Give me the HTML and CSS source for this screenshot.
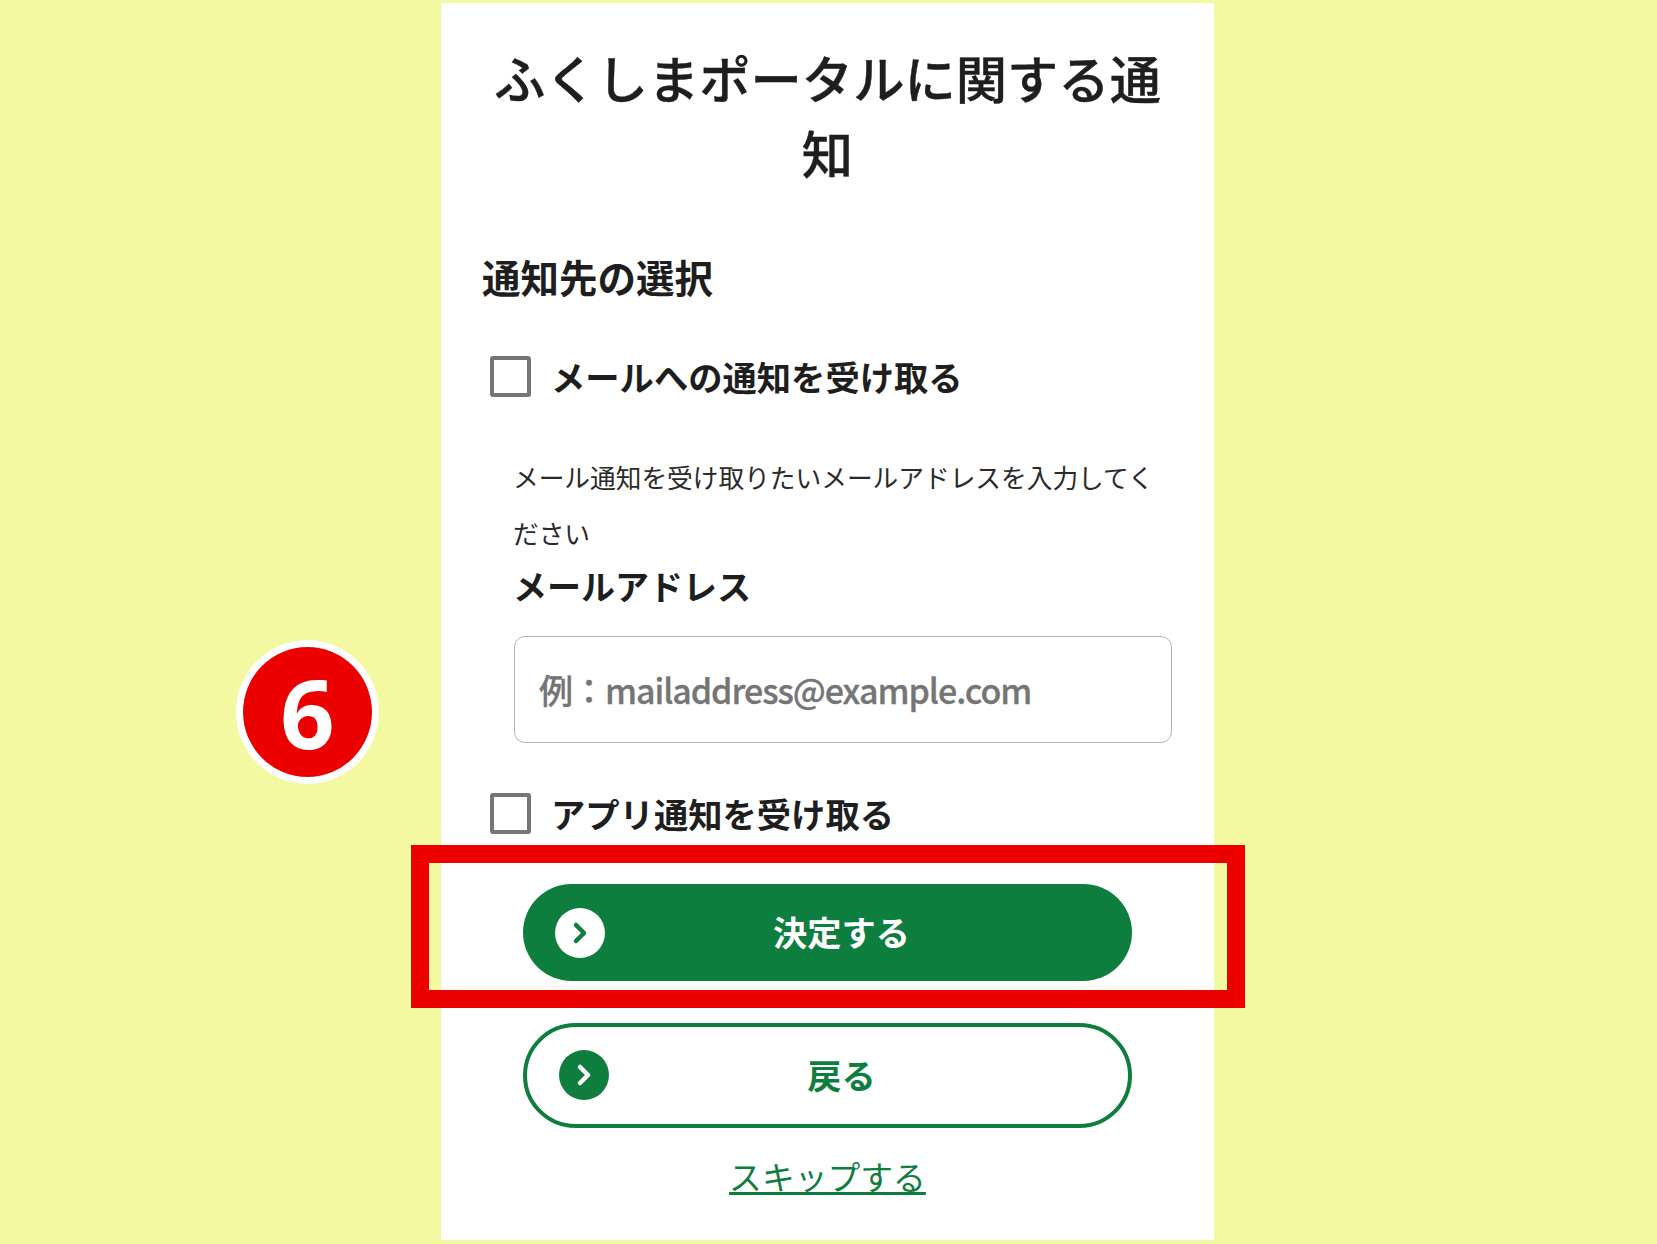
FILE: index.html
```html
<!DOCTYPE html>
<html lang="ja">
<head>
<meta charset="utf-8">
<title>ふくしまポータルに関する通知</title>
<link rel="stylesheet" href="styles.css">
</head>
<body>
<div class="page">
  <main class="card">
    <h1 class="title">ふくしまポータルに関する通知</h1>
    <h2 class="section">通知先の選択</h2>
    <label class="check first"><span class="box"></span><span>メールへの通知を受け取る</span></label>
    <div class="mail">
      <p class="note">メール通知を受け取りたいメールアドレスを入力してください</p>
      <div class="field-label">メールアドレス</div>
      <div class="input">例：mailaddress@example.com</div>
    </div>
    <label class="check second"><span class="box"></span><span>アプリ通知を受け取る</span></label>
    <div class="btn primary">
      <span class="icon"><svg viewBox="0 0 50 50" width="50" height="50"><path d="M21 17l8 8-8 8" fill="none" stroke="#0e7e3e" stroke-width="4.5" stroke-linecap="round" stroke-linejoin="round"/></svg></span>
      <span class="btn-text">決定する</span>
    </div>
    <div class="btn secondary">
      <span class="icon"><svg viewBox="0 0 50 50" width="50" height="50"><path d="M21 17l8 8-8 8" fill="none" stroke="#fff" stroke-width="4.5" stroke-linecap="round" stroke-linejoin="round"/></svg></span>
      <span class="btn-text">戻る</span>
    </div>
    <a class="skip" href="#">スキップする</a>
  </main>
  <div class="badge">6</div>
  <div class="highlight"></div>
</div>
</body>
</html>
```
FILE: styles.css
```css
* { box-sizing: border-box; }
html, body { margin: 0; padding: 0; }
body {
  background: #f3f9a0;
  font-family: "Noto Sans CJK JP", "Noto Sans", sans-serif;
  color: #1e1e1e;
}
.page {
  position: relative;
  width: 1657px;
  height: 1244px;
  overflow: hidden;
  padding: 3px 0 0 441px;
}
.card {
  width: 773px;
  height: 1237px;
  background: #fff;
  padding: 36px 41px 0;
  display: flex;
  flex-direction: column;
}
.title {
  margin: 0;
  font-size: 51.3px;
  line-height: 75px;
  font-weight: 500;
  text-align: center;
  -webkit-text-stroke: 0.4px #1e1e1e;
}
.section {
  margin: 59px 0 0;
  font-size: 38.5px;
  line-height: 56px;
  font-weight: 700;
}
.check {
  display: flex;
  align-items: center;
  gap: 20px;
  padding-left: 8px;
  height: 41px;
  font-size: 34.3px;
  font-weight: 700;
  line-height: 41px;
}
.check.first { margin-top: 52px; }
.check.second { margin-top: 50px; }
.box {
  width: 41px;
  height: 41px;
  border: 4px solid #767676;
  border-radius: 3px;
  background: #fff;
  flex: none;
}
.mail { padding-left: 31px; }
.note {
  margin: 52px 0 0;
  font-size: 25.7px;
  line-height: 56px;
  font-weight: 400;
  color: #2a2a2a;
}
.field-label {
  margin-top: 2px;
  font-size: 34px;
  line-height: 46px;
  font-weight: 700;
}
.input {
  margin: 27px 0 0 1px;
  height: 107px;
  width: 658px;
  border: 1.5px solid #b5b5b5;
  border-radius: 11px;
  padding-left: 24px;
  display: flex;
  align-items: center;
  font-size: 34px;
  font-weight: 500;
  letter-spacing: -1.05px;
  color: #757575;
  -webkit-text-stroke: 0.3px #757575;
}
.btn {
  position: relative;
  align-self: center;
  width: 609px;
  display: flex;
  align-items: center;
  justify-content: center;
  padding-left: 28px;
  border-radius: 60px;
  font-size: 34.2px;
  font-weight: 700;
}
.btn-text { margin-top: -3px; }
.primary {
  margin-top: 50px;
  height: 97px;
  background: #0e7e3e;
  color: #fff;
}
.secondary {
  margin-top: 42px;
  height: 105px;
  background: #fff;
  border: 4px solid #0e7e3e;
  color: #0e7e3e;
}
.icon {
  position: absolute;
  top: 50%;
  width: 50px;
  height: 50px;
  margin-top: -25px;
  border-radius: 50%;
}
.icon svg { display: block; }
.primary .icon { left: 32px; background: #fff; }
.secondary .icon { left: 32px; margin-top: -26px; background: #0e7e3e; }
.skip {
  align-self: center;
  margin-top: 23px;
  font-size: 32.8px;
  line-height: 50px;
  color: #0e7e3e;
  text-decoration: underline;
  text-decoration-thickness: 3px;
}
.badge {
  position: absolute;
  left: 236px;
  top: 640px;
  width: 143px;
  height: 144px;
  border: 7px solid #fff;
  border-radius: 50%;
  background: #ec0000;
  color: #fff;
  font-family: "Open Sans", sans-serif;
  font-size: 95px;
  font-weight: 700;
  line-height: 130px;
  text-align: center;
}
.highlight {
  position: absolute;
  left: 411px;
  top: 845px;
  width: 834px;
  height: 163px;
  border: 18px solid #ec0000;
}
```
